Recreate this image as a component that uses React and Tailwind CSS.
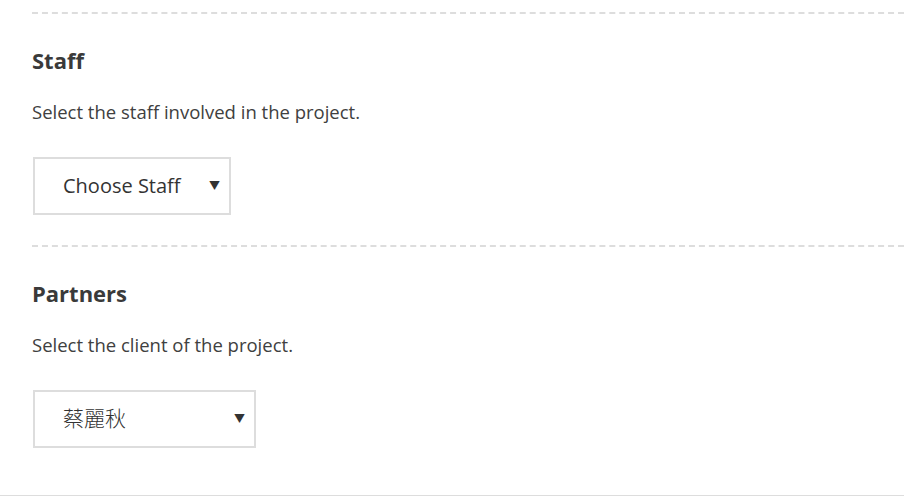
import React from 'react';

// Project form fragment: staff and partner pickers
function FakeSelect({ label, widthClass, labelClass }) {
  return (
    <div
      className={`${widthClass} ml-[1px] h-[58px] border-2 border-[#dddddd] bg-white flex items-center justify-between pl-[28px] pr-[9px]`}
    >
      <span className={`${labelClass} text-[#333333]`}>{label}</span>
      <span className="text-[11px] text-[#333333]">▼</span>
    </div>
  );
}

function Section({ title, description, children }) {
  return (
    <div className="border-t-2 border-dashed border-[#dddddd]">
      <h3 className="mt-[32px] text-[22px] leading-[28px] font-bold text-[#3a3a3a]">{title}</h3>
      <p className="mt-[26px] text-[18.5px] leading-[24px] text-[#404040]">{description}</p>
      <div className="mt-[33px]">{children}</div>
    </div>
  );
}

export default function App() {
  return (
    <div
      className="w-[904px] h-[497px] bg-white overflow-hidden"
      style={{ fontFamily: '"Open Sans", "Noto Sans CJK TC", sans-serif' }}
    >
      <div className="h-[496px] border-b border-[#dddddd] pt-[12px] pl-[32px]">
        <Section title="Staff" description="Select the staff involved in the project.">
          <FakeSelect label="Choose Staff" widthClass="w-[198px]" labelClass="text-[20px]" />
        </Section>
        <div className="h-[30px]" />
        <Section title="Partners" description="Select the client of the project.">
          <FakeSelect label="蔡麗秋" widthClass="w-[223px]" labelClass="text-[21px] font-light" />
        </Section>
      </div>
    </div>
  );
}
